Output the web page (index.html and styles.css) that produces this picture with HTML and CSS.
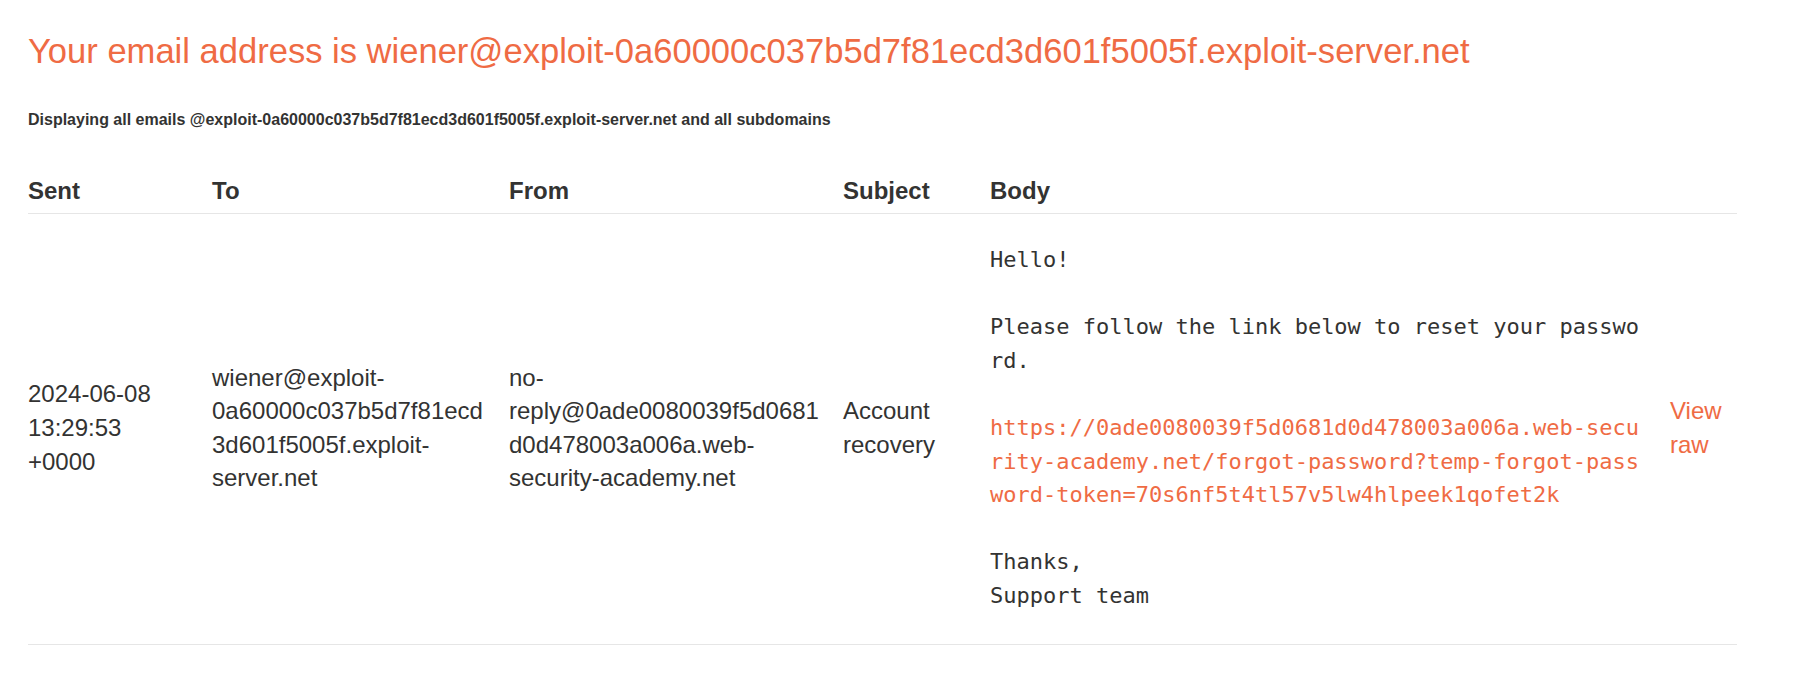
FILE: index.html
```html
<!DOCTYPE html>
<html lang="en">
<head>
<meta charset="utf-8">
<title>Exploit Server: Email client</title>
<link rel="stylesheet" href="styles.css">
</head>
<body>
<div class="page">
  <h1 class="title">Your email address is wiener@exploit-0a60000c037b5d7f81ecd3d601f5005f.exploit-server.net</h1>
  <h4 class="subtitle">Displaying all emails @exploit-0a60000c037b5d7f81ecd3d601f5005f.exploit-server.net and all subdomains</h4>
  <table class="emails">
    <colgroup>
      <col class="c-sent">
      <col class="c-to">
      <col class="c-from">
      <col class="c-subject">
      <col class="c-body">
      <col class="c-raw">
    </colgroup>
    <thead>
      <tr>
        <th>Sent</th>
        <th>To</th>
        <th>From</th>
        <th>Subject</th>
        <th>Body</th>
        <th></th>
      </tr>
    </thead>
    <tbody>
      <tr>
        <td>2024-06-08 13:29:53 +0000</td>
        <td class="wrap">wiener@exploit-0a60000c037b5d7f81ecd3d601f5005f.exploit-server.net</td>
        <td class="wrap">no-reply@0ade0080039f5d0681d0d478003a006a.web-security-academy.net</td>
        <td>Account recovery</td>
        <td class="body-cell"><pre class="mail">Hello!

Please follow the link below to reset your password.

<a class="link" href="#">https://0ade0080039f5d0681d0d478003a006a.web-security-academy.net/forgot-password?temp-forgot-password-token=70s6nf5t4tl57v5lw4hlpeek1qofet2k</a>

Thanks,
Support team</pre></td>
        <td><a class="raw" href="#">View raw</a></td>
      </tr>
    </tbody>
  </table>
</div>
</body>
</html>
```
FILE: styles.css
```css
html, body {
  margin: 0;
  padding: 0;
  background: #ffffff;
}

body {
  font-family: "Liberation Sans", Arial, sans-serif;
  color: #333332;
}

.page {
  padding: 31px 0 40px 28px;
  width: 1709px;
}

.title {
  margin: 0;
  font-size: 34.55px;
  line-height: 40px;
  font-weight: normal;
  color: #ef6b44;
  white-space: nowrap;
}

.subtitle {
  margin: 38px 0 0;
  font-size: 16px;
  line-height: 21px;
  font-weight: bold;
  color: #333332;
}

.emails {
  margin-top: 44px;
  width: 1709px;
  table-layout: fixed;
  border-collapse: collapse;
  font-size: 24px;
  line-height: 33.6px;
}

.c-sent { width: 184px; }
.c-to { width: 297px; }
.c-from { width: 334px; }
.c-subject { width: 147px; }
.c-body { width: 680px; }
.c-raw { width: 67px; }

.emails th {
  text-align: left;
  font-weight: bold;
  padding: 0 20px 5px 0;
  line-height: 34px;
  border-bottom: 1px solid #e6e6e6;
}

.emails td {
  padding: 29px 20px 31px 0;
  vertical-align: middle;
  border-bottom: 1px solid #e6e6e6;
}

.emails td:last-child {
  padding-right: 0;
}

.wrap {
  overflow-wrap: break-word;
}

.mail {
  margin: 0;
  width: calc(49ch + 1px);
  font-family: "DejaVu Sans Mono", "Liberation Mono", monospace;
  font-size: 22px;
  line-height: 33.6px;
  white-space: pre-wrap;
  word-break: break-all;
  color: #333332;
}

.link,
.raw {
  color: #ef6b44;
  text-decoration: none;
}
```
